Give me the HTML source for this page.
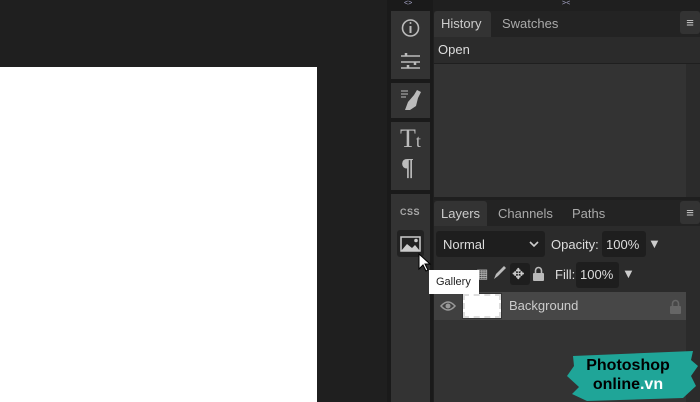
<!DOCTYPE html><html><head><style>
*{margin:0;padding:0;box-sizing:border-box}
body{width:700px;height:402px;background:#1f1f1f;position:relative;overflow:hidden;font-family:"Liberation Sans",sans-serif;color:#ccc;font-size:13px}
.a{position:absolute}
.tb{background:#333}
.t{position:absolute;font-size:13px}
</style></head><body>
<div class="a" style="left:0;top:67px;width:317px;height:335px;background:#fff"></div>
<div class="a" style="left:387px;top:0;width:46px;height:402px;background:#1a1a1a"></div>
<div class="a t" style="left:404px;top:0;font-size:7px;color:#aac">&lt;&gt;</div>
<div class="a t" style="left:562px;top:0;font-size:7px;color:#aac">&gt;&lt;</div>
<div class="a tb" style="left:391px;top:11px;width:39px;height:68px"></div>
<div class="a tb" style="left:391px;top:83px;width:39px;height:35px"></div>
<div class="a tb" style="left:391px;top:122px;width:39px;height:68px"></div>
<div class="a tb" style="left:391px;top:194px;width:39px;height:208px"></div>
<svg class="a" style="left:391px;top:0" width="39" height="270" fill="none" stroke="#bbb" stroke-width="1.6">
<circle cx="19.5" cy="28" r="8"/><line x1="19.5" y1="26" x2="19.5" y2="33" stroke-width="2"/><circle cx="19.5" cy="23" r="1" fill="#bbb" stroke="none"/>
<path d="M10 56h19M10 62h19M10 68h19"/>
<path d="M15 56v-3M24 62v3M17 68v-3" stroke-width="2.5"/>
<path d="M14 110l3-8 6-7 3-5 4 2-3 6-2 8-6 4z" fill="#bbb" stroke="none"/>
<path d="M10 91h7M10 94h7M10 97h5" stroke-width="1"/>
<rect x="6" y="230" width="27" height="27" rx="3" fill="#222" stroke="none"/>
<rect x="10" y="237" width="19" height="14" fill="none" stroke="#ccc" stroke-width="1.5"/>
<path d="M10 251l6-7 5 4 3-3 5 6z" fill="#ccc" stroke="none"/><circle cx="25" cy="240.5" r="1.8" fill="#ccc" stroke="none"/>
</svg>
<div class="a t" style="left:400px;top:124px;font-family:'Liberation Serif',serif;font-size:26px;color:#bbb">T<span style="font-size:18px">t</span></div>
<div class="a t" style="left:401px;top:155px;font-family:'Liberation Serif',serif;font-size:24px;color:#bbb;font-weight:bold">¶</div>
<div class="a t" style="left:400px;top:207px;font-size:9px;font-weight:bold;color:#aaa;letter-spacing:.5px">CSS</div>
<div class="a" style="left:434px;top:11px;width:266px;height:26px;background:#232323"></div>
<div class="a" style="left:434px;top:11px;width:57px;height:26px;background:#333;border-radius:3px 3px 0 0"></div>
<div class="t" style="left:441px;top:16px;color:#ccc">History</div>
<div class="t" style="left:502px;top:16px;color:#aaa">Swatches</div>
<div class="a" style="left:680px;top:11px;width:20px;height:23px;background:#333;border-radius:3px;color:#ccc;text-align:center;line-height:23px">≡</div>
<div class="a" style="left:434px;top:37px;width:266px;height:26px;background:#2b2b2b"></div>
<div class="t" style="left:438px;top:42px;color:#ddd">Open</div>
<div class="a" style="left:434px;top:64px;width:252px;height:133px;background:#333"></div>
<div class="a" style="left:686px;top:64px;width:14px;height:133px;background:#2b2b2b"></div>
<div class="a" style="left:434px;top:200px;width:266px;height:26px;background:#232323"></div>
<div class="a" style="left:434px;top:201px;width:53px;height:25px;background:#333;border-radius:3px 3px 0 0"></div>
<div class="t" style="left:441px;top:206px">Layers</div>
<div class="t" style="left:498px;top:206px;color:#aaa">Channels</div>
<div class="t" style="left:572px;top:206px;color:#aaa">Paths</div>
<div class="a" style="left:680px;top:201px;width:20px;height:23px;background:#333;border-radius:3px;color:#ccc;text-align:center;line-height:23px">≡</div>
<div class="a" style="left:434px;top:226px;width:266px;height:66px;background:#2b2b2b"></div>
<div class="a" style="left:436px;top:231px;width:109px;height:26px;background:#1e1e1e;border-radius:3px"></div>
<div class="t" style="left:443px;top:237px;color:#ddd">Normal</div>
<svg class="a" style="left:529px;top:241px" width="10" height="7"><path d="M1 1l4 4 4-4" stroke="#ccc" stroke-width="1.6" fill="none"/></svg>
<div class="t" style="left:551px;top:237px;color:#ddd">Opacity:</div>
<div class="a" style="left:602px;top:231px;width:44px;height:26px;background:#1e1e1e;border-radius:3px"></div>
<div class="t" style="left:606px;top:237px;color:#ddd">100%</div>
<div class="t" style="left:648px;top:236px;color:#ccc">▼</div>
<div class="a" style="left:510px;top:263px;width:20px;height:22px;background:#1e1e1e;border-radius:3px"></div>
<div class="t" style="left:512px;top:265px;color:#ccc;font-size:15px">✥</div>
<div class="t" style="left:476px;top:266px;color:#bbb">▦</div>
<svg class="a" style="left:493px;top:266px" width="14" height="14"><path d="M1 13l2-5 6-6 2-2 2 2-2 2-6 6z" fill="#bbb"/></svg>
<svg class="a" style="left:532px;top:266px" width="13" height="15"><path d="M3.5 7V4.5a3 3 0 016 0V7" stroke="#bbb" stroke-width="1.6" fill="none"/><rect x="1" y="7" width="11" height="8" rx="1" fill="#bbb"/></svg>
<div class="t" style="left:555px;top:267px;color:#ddd">Fill:</div>
<div class="a" style="left:576px;top:262px;width:43px;height:26px;background:#1e1e1e;border-radius:3px"></div>
<div class="t" style="left:580px;top:267px;color:#ddd">100%</div>
<div class="t" style="left:622px;top:266px;color:#ccc">▼</div>
<div class="a" style="left:434px;top:292px;width:252px;height:110px;background:#333"></div>
<div class="a" style="left:434px;top:292px;width:252px;height:28px;background:#474747"></div>
<div class="a" style="left:434px;top:292px;width:28px;height:28px;background:#404040"></div>
<div class="a" style="left:686px;top:292px;width:14px;height:110px;background:#2b2b2b"></div>
<svg class="a" style="left:440px;top:300px" width="16" height="12"><path d="M1 6q7-8 14 0q-7 8-14 0z" fill="none" stroke="#999" stroke-width="1.5"/><circle cx="8" cy="6" r="2.5" fill="#999"/></svg>
<div class="a" style="left:463px;top:294px;width:38px;height:24px;border:2px dashed #ddd;background:#fff;outline:1px solid #333"></div>
<div class="t" style="left:509px;top:298px;color:#ccc">Background</div>
<svg class="a" style="left:669px;top:299px" width="13" height="15"><path d="M3.5 7V4.5a3 3 0 016 0V7" stroke="#666" stroke-width="1.6" fill="none"/><rect x="1" y="7" width="11" height="8" rx="1" fill="#666"/></svg>
<div class="a" style="left:429px;top:270px;width:50px;height:24px;background:#fff;color:#222;font-size:11px;padding:6px 0 0 7px">Gallery</div>
<svg class="a" style="left:418px;top:253px" width="14" height="20"><path d="M1 1v15l4-4 3 6 2-1-3-6h5z" fill="#fff" stroke="#000"/></svg>
<svg class="a" style="left:565px;top:350px" width="135" height="52"><path d="M8 6L128 1 126 10 133 16 126 26 131 36 118 48 22 51 7 44 14 37 2 26 9 16z" fill="#1fa598"/></svg>
<div class="a" style="left:568px;top:356px;font-weight:bold;font-size:16px;color:#000;line-height:19px;text-align:center;width:120px">Photoshop<br>online<span style="color:#fff">.vn</span></div>
</body></html>
